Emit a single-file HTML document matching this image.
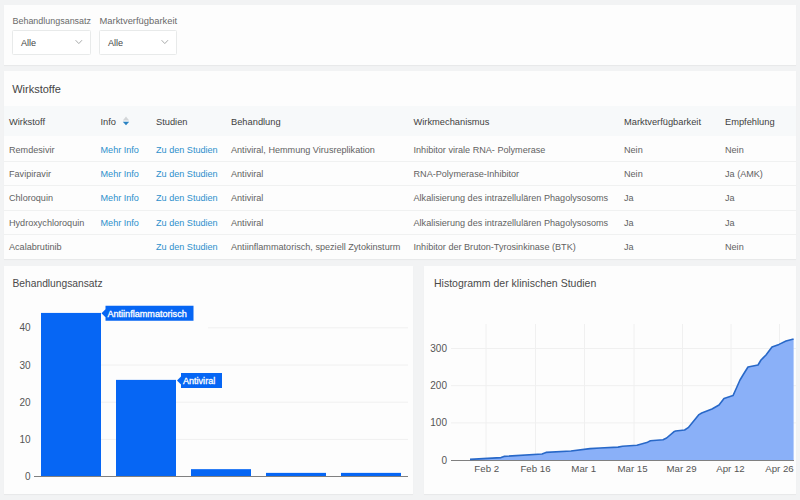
<!DOCTYPE html>
<html><head><meta charset="utf-8">
<style>
html,body{margin:0;padding:0;}
body{width:800px;height:500px;overflow:hidden;background:#f2f3f4;position:relative;font-family:"Liberation Sans",sans-serif;}
.card{position:absolute;background:#fdfdfd;box-shadow:0 1px 1px rgba(0,0,0,0.04);}
.t{position:absolute;white-space:nowrap;}
.box{position:absolute;border:1px solid #e8eaea;border-radius:1.5px;background:#fff;box-sizing:border-box;}
.hl{position:absolute;height:1px;background:#f0f1f1;}
</style></head><body>
<div class="card" style="left:4px;top:5px;width:792px;height:60px"></div>
<div class="t" style="left:12.5px;top:17.42px;font-size:8.95px;line-height:8.95px;color:#6a6a6a;">Behandlungsansatz</div>
<div class="t" style="left:99.5px;top:16.44px;font-size:9.4px;line-height:9.4px;color:#6a6a6a;">Marktverfügbarkeit</div>
<div class="box" style="left:12px;top:30px;width:78.5px;height:25px"></div>
<div class="box" style="left:99px;top:30px;width:78px;height:25px"></div>
<div class="t" style="left:21px;top:39.30px;font-size:9.1px;line-height:9.1px;color:#444;">Alle</div>
<div class="t" style="left:108px;top:39.30px;font-size:9.1px;line-height:9.1px;color:#444;">Alle</div>
<svg style="position:absolute;left:74.7px;top:39px" width="8" height="7"><path d="M0.6 1.2 L3.8 4.6 L7 1.2" fill="none" stroke="#a9abab" stroke-width="1"/></svg>
<svg style="position:absolute;left:161.2px;top:39px" width="8" height="7"><path d="M0.6 1.2 L3.8 4.6 L7 1.2" fill="none" stroke="#a9abab" stroke-width="1"/></svg>
<div class="card" style="left:4px;top:70.5px;width:792px;height:188.5px"></div>
<div class="t" style="left:12.2px;top:83.69px;font-size:11px;line-height:11px;color:#444;">Wirkstoffe</div>
<div style="position:absolute;left:4px;top:106px;width:792px;height:30px;background:#f7f9fa"></div>
<div class="t" style="left:9px;top:118.23px;font-size:9.3px;line-height:9.3px;color:#3f3f3f;">Wirkstoff</div>
<div class="t" style="left:100.5px;top:118.23px;font-size:9.3px;line-height:9.3px;color:#3f3f3f;">Info</div>
<div class="t" style="left:156px;top:118.23px;font-size:9.3px;line-height:9.3px;color:#3f3f3f;">Studien</div>
<div class="t" style="left:231px;top:118.23px;font-size:9.3px;line-height:9.3px;color:#3f3f3f;">Behandlung</div>
<div class="t" style="left:413.5px;top:118.23px;font-size:9.3px;line-height:9.3px;color:#3f3f3f;">Wirkmechanismus</div>
<div class="t" style="left:624px;top:118.23px;font-size:9.3px;line-height:9.3px;color:#3f3f3f;">Marktverfügbarkeit</div>
<div class="t" style="left:725px;top:118.23px;font-size:9.3px;line-height:9.3px;color:#3f3f3f;">Empfehlung</div>
<svg style="position:absolute;left:122px;top:116px" width="8" height="10"><path d="M4 0.6 L7.2 4.6 L0.8 4.6 Z" fill="#d3d6d8"/><path d="M4 9.2 L7.2 5.8 L0.8 5.8 Z" fill="#2a82c2"/></svg>
<div class="t" style="left:9px;top:145.60px;font-size:9.1px;line-height:9.1px;color:#626262;">Remdesivir</div>
<div class="t" style="left:100.5px;top:145.60px;font-size:9.1px;line-height:9.1px;color:#2d90cc;">Mehr Info</div>
<div class="t" style="left:156px;top:145.60px;font-size:9.1px;line-height:9.1px;color:#2d90cc;">Zu den Studien</div>
<div class="t" style="left:231px;top:145.60px;font-size:9.1px;line-height:9.1px;color:#626262;">Antiviral, Hemmung Virusreplikation</div>
<div class="t" style="left:413.5px;top:145.60px;font-size:9.1px;line-height:9.1px;color:#626262;">Inhibitor virale RNA- Polymerase</div>
<div class="t" style="left:624px;top:145.60px;font-size:9.1px;line-height:9.1px;color:#626262;">Nein</div>
<div class="t" style="left:725px;top:145.60px;font-size:9.1px;line-height:9.1px;color:#626262;">Nein</div>
<div class="t" style="left:9px;top:169.95px;font-size:9.1px;line-height:9.1px;color:#626262;">Favipiravir</div>
<div class="t" style="left:100.5px;top:169.95px;font-size:9.1px;line-height:9.1px;color:#2d90cc;">Mehr Info</div>
<div class="t" style="left:156px;top:169.95px;font-size:9.1px;line-height:9.1px;color:#2d90cc;">Zu den Studien</div>
<div class="t" style="left:231px;top:169.95px;font-size:9.1px;line-height:9.1px;color:#626262;">Antiviral</div>
<div class="t" style="left:413.5px;top:169.95px;font-size:9.1px;line-height:9.1px;color:#626262;">RNA-Polymerase-Inhibitor</div>
<div class="t" style="left:624px;top:169.95px;font-size:9.1px;line-height:9.1px;color:#626262;">Nein</div>
<div class="t" style="left:725px;top:169.95px;font-size:9.1px;line-height:9.1px;color:#626262;">Ja (AMK)</div>
<div class="t" style="left:9px;top:194.30px;font-size:9.1px;line-height:9.1px;color:#626262;">Chloroquin</div>
<div class="t" style="left:100.5px;top:194.30px;font-size:9.1px;line-height:9.1px;color:#2d90cc;">Mehr Info</div>
<div class="t" style="left:156px;top:194.30px;font-size:9.1px;line-height:9.1px;color:#2d90cc;">Zu den Studien</div>
<div class="t" style="left:231px;top:194.30px;font-size:9.1px;line-height:9.1px;color:#626262;">Antiviral</div>
<div class="t" style="left:413.5px;top:194.30px;font-size:9.1px;line-height:9.1px;color:#626262;">Alkalisierung des intrazellulären Phagolysosoms</div>
<div class="t" style="left:624px;top:194.30px;font-size:9.1px;line-height:9.1px;color:#626262;">Ja</div>
<div class="t" style="left:725px;top:194.30px;font-size:9.1px;line-height:9.1px;color:#626262;">Ja</div>
<div class="t" style="left:9px;top:218.65px;font-size:9.1px;line-height:9.1px;color:#626262;">Hydroxychloroquin</div>
<div class="t" style="left:100.5px;top:218.65px;font-size:9.1px;line-height:9.1px;color:#2d90cc;">Mehr Info</div>
<div class="t" style="left:156px;top:218.65px;font-size:9.1px;line-height:9.1px;color:#2d90cc;">Zu den Studien</div>
<div class="t" style="left:231px;top:218.65px;font-size:9.1px;line-height:9.1px;color:#626262;">Antiviral</div>
<div class="t" style="left:413.5px;top:218.65px;font-size:9.1px;line-height:9.1px;color:#626262;">Alkalisierung des intrazellulären Phagolysosoms</div>
<div class="t" style="left:624px;top:218.65px;font-size:9.1px;line-height:9.1px;color:#626262;">Ja</div>
<div class="t" style="left:725px;top:218.65px;font-size:9.1px;line-height:9.1px;color:#626262;">Ja</div>
<div class="t" style="left:9px;top:243.00px;font-size:9.1px;line-height:9.1px;color:#626262;">Acalabrutinib</div>
<div class="t" style="left:156px;top:243.00px;font-size:9.1px;line-height:9.1px;color:#2d90cc;">Zu den Studien</div>
<div class="t" style="left:231px;top:243.00px;font-size:9.1px;line-height:9.1px;color:#626262;">Antiinflammatorisch, speziell Zytokinsturm</div>
<div class="t" style="left:413.5px;top:243.00px;font-size:9.1px;line-height:9.1px;color:#626262;">Inhibitor der Bruton-Tyrosinkinase (BTK)</div>
<div class="t" style="left:624px;top:243.00px;font-size:9.1px;line-height:9.1px;color:#626262;">Ja</div>
<div class="t" style="left:725px;top:243.00px;font-size:9.1px;line-height:9.1px;color:#626262;">Nein</div>
<div class="hl" style="left:4px;top:161.0px;width:792px"></div>
<div class="hl" style="left:4px;top:185.4px;width:792px"></div>
<div class="hl" style="left:4px;top:209.7px;width:792px"></div>
<div class="hl" style="left:4px;top:234.0px;width:792px"></div>
<div class="card" style="left:4px;top:266px;width:408.5px;height:228px"></div>
<div class="t" style="left:12.5px;top:279.12px;font-size:10.25px;line-height:10.25px;color:#4a4a4a;">Behandlungsansatz</div>
<div class="card" style="left:423.5px;top:266px;width:372.5px;height:228px"></div>
<div class="t" style="left:434px;top:278.21px;font-size:10.5px;line-height:10.5px;color:#4a4a4a;">Histogramm der klinischen Studien</div>
<svg style="position:absolute;left:0;top:0" width="800" height="500" font-family="Liberation Sans, sans-serif">
<line x1="41" x2="408" y1="439.40" y2="439.40" stroke="#f0f0f0" stroke-width="1"/>
<line x1="41" x2="408" y1="402.20" y2="402.20" stroke="#f0f0f0" stroke-width="1"/>
<line x1="41" x2="408" y1="365.00" y2="365.00" stroke="#f0f0f0" stroke-width="1"/>
<line x1="208" x2="408" y1="327.80" y2="327.80" stroke="#f0f0f0" stroke-width="1"/>
<text x="30.5" y="480.10" font-size="10" fill="#555" text-anchor="end">0</text>
<text x="30.5" y="442.90" font-size="10" fill="#555" text-anchor="end">10</text>
<text x="30.5" y="405.70" font-size="10" fill="#555" text-anchor="end">20</text>
<text x="30.5" y="368.50" font-size="10" fill="#555" text-anchor="end">30</text>
<text x="30.5" y="331.30" font-size="10" fill="#555" text-anchor="end">40</text>
<rect x="41" y="312.92" width="60" height="163.68" fill="#0666f4"/>
<rect x="116" y="379.88" width="60" height="96.72" fill="#0666f4"/>
<rect x="191" y="469.16" width="60" height="7.44" fill="#0666f4"/>
<rect x="266" y="472.88" width="60" height="3.72" fill="#0666f4"/>
<rect x="341" y="472.88" width="60" height="3.72" fill="#0666f4"/>
<line x1="34" x2="408" y1="476.5" y2="476.5" stroke="#808080" stroke-width="1"/>
<path d="M101.5 313.2 L105.5 309.2 L105.5 305.7 L193.5 305.7 L193.5 320.7 L105.5 320.7 L105.5 317.2 Z" fill="#0666f4"/><text x="107.4" y="316.8" font-size="9.1" fill="#fff" stroke="#fff" stroke-width="0.3">Antiinflammatorisch</text>
<path d="M177 380.5 L181 376.5 L181 373 L222 373 L222 388 L181 388 L181 384.5 Z" fill="#0666f4"/><text x="182.9" y="384.1" font-size="9.1" fill="#fff" stroke="#fff" stroke-width="0.3">Antiviral</text>
<line x1="486" x2="486" y1="324" y2="459" stroke="#f0f0f0" stroke-width="1"/>
<line x1="535.5" x2="535.5" y1="324" y2="459" stroke="#f0f0f0" stroke-width="1"/>
<line x1="584.5" x2="584.5" y1="324" y2="459" stroke="#f0f0f0" stroke-width="1"/>
<line x1="634" x2="634" y1="324" y2="459" stroke="#f0f0f0" stroke-width="1"/>
<line x1="682.5" x2="682.5" y1="324" y2="459" stroke="#f0f0f0" stroke-width="1"/>
<line x1="731" x2="731" y1="324" y2="459" stroke="#f0f0f0" stroke-width="1"/>
<line x1="779.5" x2="779.5" y1="324" y2="459" stroke="#f0f0f0" stroke-width="1"/>
<line x1="451" x2="796" y1="422.83" y2="422.83" stroke="#f0f0f0" stroke-width="1"/>
<line x1="451" x2="796" y1="385.66" y2="385.66" stroke="#f0f0f0" stroke-width="1"/>
<line x1="451" x2="796" y1="348.49" y2="348.49" stroke="#f0f0f0" stroke-width="1"/>
<text x="447" y="463.50" font-size="10" fill="#555" text-anchor="end">0</text>
<text x="447" y="426.33" font-size="10" fill="#555" text-anchor="end">100</text>
<text x="447" y="389.16" font-size="10" fill="#555" text-anchor="end">200</text>
<text x="447" y="351.99" font-size="10" fill="#555" text-anchor="end">300</text>
<path d="M470 459.4 L501 457.6 L504 456.4 L542 454 L546 452.4 L571 451 L590 448.6 L600 448 L618 447.1 L622.5 446.2 L636.9 445.2 L646.8 442.6 L650.4 440.7 L663 439.8 L666.6 438 L673.8 431.8 L675.6 431 L684.6 430 L688.2 427.7 L699 414.6 L701.7 413 L712 409 L719 405 L724 398.4 L733 395.6 L736 389 L740 380 L743 375 L748 367 L758 365 L761 360 L766 355 L772 347 L779 344.4 L786 341 L793.6 339 L793.6 460 L470 460 Z" fill="#8ab0f8"/>
<line x1="451" x2="794" y1="460.5" y2="460.5" stroke="#808080" stroke-width="1"/>
<path d="M470 459.4 L501 457.6 L504 456.4 L542 454 L546 452.4 L571 451 L590 448.6 L600 448 L618 447.1 L622.5 446.2 L636.9 445.2 L646.8 442.6 L650.4 440.7 L663 439.8 L666.6 438 L673.8 431.8 L675.6 431 L684.6 430 L688.2 427.7 L699 414.6 L701.7 413 L712 409 L719 405 L724 398.4 L733 395.6 L736 389 L740 380 L743 375 L748 367 L758 365 L761 360 L766 355 L772 347 L779 344.4 L786 341 L793.6 339" fill="none" stroke="#2868c8" stroke-width="1.6" stroke-linejoin="round"/>
<text x="486.75" y="472.2" font-size="9.7" fill="#555" text-anchor="middle">Feb 2</text>
<text x="535.5" y="472.2" font-size="9.7" fill="#555" text-anchor="middle">Feb 16</text>
<text x="583.75" y="472.2" font-size="9.7" fill="#555" text-anchor="middle">Mar 1</text>
<text x="632.5" y="472.2" font-size="9.7" fill="#555" text-anchor="middle">Mar 15</text>
<text x="681.5" y="472.2" font-size="9.7" fill="#555" text-anchor="middle">Mar 29</text>
<text x="730.5" y="472.2" font-size="9.7" fill="#555" text-anchor="middle">Apr 12</text>
<text x="779.5" y="472.2" font-size="9.7" fill="#555" text-anchor="middle">Apr 26</text>
</svg>
</body></html>
